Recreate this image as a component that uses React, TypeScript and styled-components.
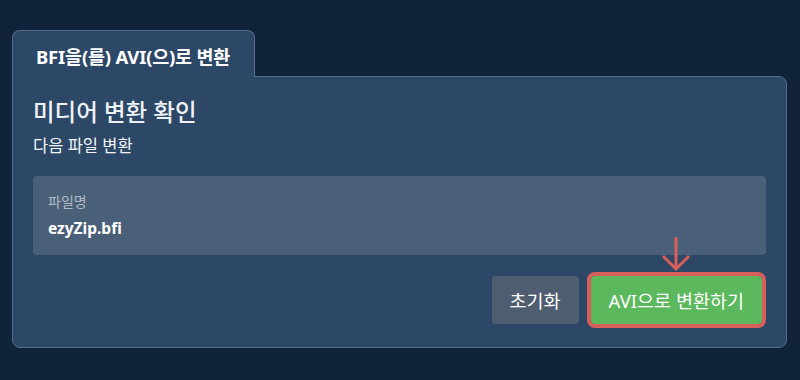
import React from 'react';
import styled, { createGlobalStyle } from 'styled-components';

const GlobalStyle = createGlobalStyle`
  html, body {
    margin: 0;
    padding: 0;
    background: #11233a;
  }
  body {
    font-family: "Noto Sans", "Noto Sans CJK KR", sans-serif;
    color: #ffffff;
  }
`

const Page = styled.div`
  padding: 30px 13px 0 12px;
  height: 380px;
  box-sizing: border-box;
`

const Tabs = styled.div`
  display: flex;
`

const Tab = styled.div`
  position: relative;
  z-index: 1;
  margin-bottom: -1px;
  height: 47px;
  box-sizing: border-box;
  display: flex;
  align-items: center;
  padding: 3px 24px 0 23px;
  background: #2c4866;
  border: 1px solid #536d8c;
  border-bottom: none;
  border-radius: 8px 8px 0 0;
  font-size: 18.5px;
  font-weight: 700;
  letter-spacing: -0.2px;
`

const Panel = styled.div`
  background: #2c4866;
  border: 1px solid #536d8c;
  border-radius: 0 8px 8px 8px;
  padding: 18px 20px 23px 20px;
`

const Title = styled.h2`
  margin: 0;
  font-size: 23.5px;
  line-height: 34px;
  font-weight: 500;
  color: #eef1f5;
`

const Subtitle = styled.p`
  margin: 6px 0 0;
  font-size: 16.5px;
  line-height: 22px;
  color: #f2f4f7;
`

const InfoBox = styled.div`
  margin-top: 19px;
  background: #4a6078;
  border-radius: 4px;
  padding: 16px 15px 16px;
  display: flex;
  flex-direction: column;
  gap: 5px;
`

const Label = styled.span`
  font-size: 14px;
  line-height: 20px;
  color: #b0bbc8;
`

const FileName = styled.span`
  font-size: 15.5px;
  line-height: 22px;
  font-weight: 700;
  color: #ffffff;
`

const Actions = styled.div`
  display: flex;
  justify-content: flex-end;
  align-items: center;
  gap: 12px;
  margin-top: 21px;
  padding-right: 4px;
`

const Button = styled.button<{ $variant: 'reset' | 'primary' }>`
  position: relative;
  height: 48px;
  padding: 0 18px;
  border: none;
  border-radius: 4px;
  font-family: inherit;
  font-size: 18.5px;
  color: #ffffff;
  background: ${p => (p.$variant === 'primary' ? '#5cb85c' : '#4e5e70')};
  outline: ${p => (p.$variant === 'primary' ? '4px solid #d9605a' : 'none')};
  cursor: pointer;
`

const Pointer = styled.svg`
  position: absolute;
  left: 50%;
  bottom: 100%;
  margin-bottom: 4px;
  transform: translateX(-50%);
`

function DownArrow() {
  return (
    <Pointer width="30" height="36" viewBox="0 0 30 36" fill="none">
      <path d="M15 1 V33 M2 20 L15 33 L28 20" stroke="#d9605a" strokeWidth="3" />
    </Pointer>
  )
}

export default function App() {
  return (
    <Page>
      <GlobalStyle />
      <Tabs>
        <Tab>BFI을(를) AVI(으)로 변환</Tab>
      </Tabs>
      <Panel>
        <Title>미디어 변환 확인</Title>
        <Subtitle>다음 파일 변환</Subtitle>
        <InfoBox>
          <Label>파일명</Label>
          <FileName>ezyZip.bfi</FileName>
        </InfoBox>
        <Actions>
          <Button $variant="reset">초기화</Button>
          <Button $variant="primary">
            <DownArrow />
            AVI으로 변환하기
          </Button>
        </Actions>
      </Panel>
    </Page>
  )
}
